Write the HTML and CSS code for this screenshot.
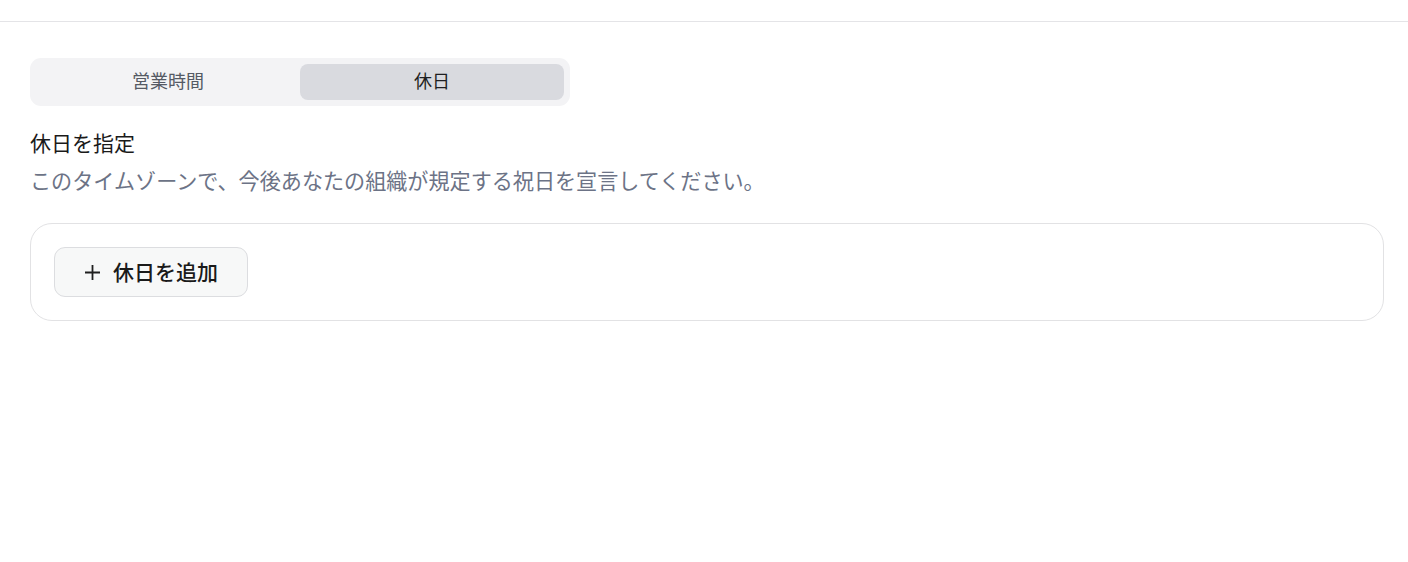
FILE: index.html
```html
<!DOCTYPE html>
<html lang="ja">
<head>
<meta charset="utf-8">
<link rel="stylesheet" href="styles.css">
</head>
<body>
<header class="topbar"></header>
<main class="content">
  <div class="tabs">
    <button class="tab">営業時間</button>
    <button class="tab active">休日</button>
  </div>
  <h2 class="title">休日を指定</h2>
  <p class="subtitle">このタイムゾーンで、今後あなたの組織が規定する祝日を宣言してください。</p>
  <section class="card">
    <button class="add-btn">
      <svg class="plus" width="15" height="15" viewBox="0 0 15 15" aria-hidden="true">
        <path d="M7.5 0v15M0 7.5h15" stroke="#1f1f1f" stroke-width="1.8" fill="none"/>
      </svg>
      <span class="add-label">休日を追加</span>
    </button>
  </section>
</main>
</body>
</html>
```
FILE: styles.css
```css
* { box-sizing: border-box; }
html, body { margin: 0; padding: 0; background: #ffffff; }
body {
  font-family: "Noto Sans CJK JP", "Noto Sans", sans-serif;
  color: #1c1c1e;
}
.topbar {
  height: 22px;
  border-bottom: 1px solid #e4e4e7;
}
.content {
  padding: 36px 24px 0 30px;
}
.tabs {
  width: 540px;
  height: 48px;
  background: #f3f3f5;
  border-radius: 11px;
  padding: 6px;
  display: flex;
}
.tab {
  flex: 1;
  height: 36px;
  border: none;
  background: transparent;
  border-radius: 8px;
  font-family: inherit;
  font-size: 18px;
  color: #555a64;
  padding: 0 0 3px 0;
  line-height: 33px;
}
.tab.active {
  background: #d9dadf;
  color: #1f1f22;
}
.title {
  margin: 20px 0 0 0;
  font-size: 21px;
  font-weight: 400;
  line-height: 32px;
  color: #1a1a1a;
}
.subtitle {
  margin: 6px 0 0 0;
  font-size: 21.1px;
  line-height: 32px;
  color: #6c7386;
}
.card {
  margin-top: 27px;
  border: 1px solid #e2e2e4;
  border-radius: 22px;
  padding: 23px;
  height: 98px;
}
.add-btn {
  display: flex;
  align-items: center;
  gap: 13px;
  height: 50px;
  padding: 0 29px 3px 30px;
  background: #f7f8f8;
  border: 1px solid #dcdde0;
  border-radius: 11px;
  font-family: inherit;
  font-size: 21px;
  font-weight: 500;
  color: #1a1a1a;
}
.plus { display: block; margin-top: 3px; }
.add-label { line-height: 30px; }
```
